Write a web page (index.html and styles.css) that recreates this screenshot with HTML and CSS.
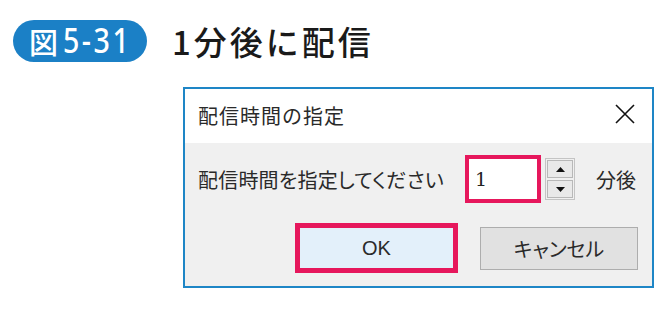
FILE: index.html
```html
<!DOCTYPE html>
<html lang="ja">
<head>
<meta charset="utf-8">
<link rel="stylesheet" href="styles.css">
</head>
<body>
<div class="page">
  <header class="fig-header">
    <span class="badge"><span class="badge-kanji">図</span><span class="badge-num">5-31</span></span>
    <h1 class="fig-title">1分後に配信</h1>
  </header>
  <div class="dialog">
    <div class="titlebar">
      <span class="titlebar-text">配信時間の指定</span>
      <svg class="close" width="20" height="20" viewBox="0 0 20 20"><path d="M1 1 L19 19 M19 1 L1 19" stroke="#111" stroke-width="1.6" fill="none"/></svg>
    </div>
    <div class="dialog-body">
      <div class="row">
        <span class="label">配信時間を指定してください</span>
        <div class="input"><span class="input-value">1</span></div>
        <div class="spinner">
          <div class="spin-btn"><svg width="9" height="5" viewBox="0 0 9 5"><path d="M4.5 0 L9 5 L0 5 Z" fill="#111"/></svg></div>
          <div class="spin-btn"><svg width="9" height="5" viewBox="0 0 9 5"><path d="M0 0 L9 0 L4.5 5 Z" fill="#111"/></svg></div>
        </div>
        <span class="unit">分後</span>
      </div>
      <div class="buttons">
        <div class="btn btn-ok">OK</div>
        <div class="btn btn-cancel">キャンセル</div>
      </div>
    </div>
  </div>
</div>
</body>
</html>
```
FILE: styles.css
```css
html, body {
  margin: 0;
  padding: 0;
  background: #ffffff;
}
.page {
  width: 670px;
  height: 316px;
  font-family: "Noto Sans CJK JP", "Noto Sans", sans-serif;
  color: #222;
}
.fig-header {
  display: flex;
  align-items: center;
  padding: 20px 0 0 13px;
  height: 42px;
}
.badge {
  display: flex;
  align-items: center;
  width: 134px;
  height: 42px;
  border-radius: 21px;
  background: #1b80c6;
  color: #fff;
  font-weight: 500;
  font-size: 29px;
  line-height: 1;
  box-sizing: border-box;
  padding-left: 16px;
}
.badge-kanji {
  margin-right: 5px;
}
.badge-num {
  display: inline-block;
  font-family: "Noto Sans", sans-serif;
  font-weight: 500;
  font-size: 34px;
  letter-spacing: 3px;
  transform: scaleX(0.84);
  transform-origin: left center;
  margin-top: -2px;
}
.fig-title {
  margin: 0 0 0 25px;
  font-size: 33px;
  font-weight: 500;
  letter-spacing: 3px;
  color: #1a1a1a;
  line-height: 1;
}
.dialog {
  margin: 25px 0 0 183px;
  width: 471px;
  height: 201px;
  box-sizing: border-box;
  border: 2px solid #1e86c6;
  display: flex;
  flex-direction: column;
}
.titlebar {
  height: 54px;
  background: #fff;
  display: flex;
  align-items: center;
  justify-content: space-between;
  padding: 0 17px 0 13px;
  flex-shrink: 0;
}
.titlebar-text {
  font-size: 20px;
  letter-spacing: 1px;
  color: #2a2a2a;
  margin-top: -2px;
}
.close {
  margin-top: -4px;
}
.dialog-body {
  flex: 1;
  background: #f0f0f0;
  padding: 12px 14px 0 13px;
}
.row {
  display: flex;
  align-items: center;
  height: 48px;
}
.label {
  width: 267px;
  font-size: 20px;
  font-feature-settings: "palt";
  letter-spacing: 0.2px;
  color: #2a2a2a;
  white-space: nowrap;
}
.input {
  width: 76px;
  height: 48px;
  box-sizing: border-box;
  border: 4px solid #e6175c;
  background: #fff;
  display: flex;
  align-items: center;
  padding-left: 6px;
}
.input-value {
  font-family: "DejaVu Serif", serif;
  font-size: 19px;
  color: #222;
}
.spinner {
  margin-left: 4px;
  width: 30px;
  height: 42px;
  box-sizing: border-box;
  border: 1px solid #c4c4c4;
  padding: 1px;
  display: flex;
  flex-direction: column;
  gap: 2px;
}
.spin-btn {
  flex: 1;
  box-sizing: border-box;
  border: 1px solid #b8b8b8;
  background: #e9e9e9;
  display: flex;
  align-items: center;
  justify-content: center;
}
.unit {
  margin-left: 21px;
  font-size: 20px;
  color: #2a2a2a;
}
.buttons {
  display: flex;
  justify-content: flex-end;
  align-items: center;
  gap: 22px;
  margin-top: 20px;
}
.btn {
  display: flex;
  align-items: center;
  justify-content: center;
  box-sizing: border-box;
  font-size: 20px;
  color: #2a2a2a;
}
.btn-ok {
  width: 163px;
  height: 50px;
  border: 5px solid #e6175c;
  background: #e3f0fa;
  font-family: "Liberation Sans", sans-serif;
}
.btn-cancel {
  width: 158px;
  height: 43px;
  border: 1px solid #adadad;
  background: #e1e1e1;
  font-feature-settings: "palt";
}
```
